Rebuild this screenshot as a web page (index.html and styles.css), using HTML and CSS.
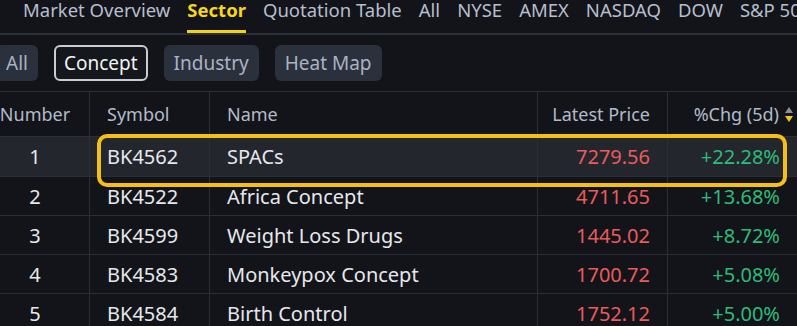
FILE: index.html
```html
<!DOCTYPE html>
<html lang="en">
<head>
<meta charset="utf-8">
<title>Sector</title>
<link rel="stylesheet" href="styles.css">
</head>
<body>
<div class="page">
  <nav class="tabs">
    <span class="tab-divider"></span>
    <a class="tab">Market Overview</a>
    <a class="tab active">Sector</a>
    <a class="tab">Quotation Table</a>
    <a class="tab">All</a>
    <a class="tab">NYSE</a>
    <a class="tab">AMEX</a>
    <a class="tab">NASDAQ</a>
    <a class="tab">DOW</a>
    <a class="tab">S&amp;P 500</a>
  </nav>
  <div class="pills">
    <span class="pill">All</span>
    <span class="pill selected">Concept</span>
    <span class="pill">Industry</span>
    <span class="pill">Heat Map</span>
  </div>
  <div class="table">
    <div class="row head">
      <div class="cell num">Number</div>
      <div class="cell">Symbol</div>
      <div class="cell">Name</div>
      <div class="cell right">Latest Price</div>
      <div class="cell right chg-head">%Chg (5d)<span class="sort"><span class="up"></span><span class="down"></span></span></div>
    </div>
    <div class="row hl">
      <div class="cell num">1</div>
      <div class="cell">BK4562</div>
      <div class="cell">SPACs</div>
      <div class="cell right red">7279.56</div>
      <div class="cell right green">+22.28%</div>
    </div>
    <div class="row">
      <div class="cell num">2</div>
      <div class="cell">BK4522</div>
      <div class="cell">Africa Concept</div>
      <div class="cell right red">4711.65</div>
      <div class="cell right green">+13.68%</div>
    </div>
    <div class="row">
      <div class="cell num">3</div>
      <div class="cell">BK4599</div>
      <div class="cell">Weight Loss Drugs</div>
      <div class="cell right red">1445.02</div>
      <div class="cell right green">+8.72%</div>
    </div>
    <div class="row">
      <div class="cell num">4</div>
      <div class="cell">BK4583</div>
      <div class="cell">Monkeypox Concept</div>
      <div class="cell right red">1700.72</div>
      <div class="cell right green">+5.08%</div>
    </div>
    <div class="row">
      <div class="cell num">5</div>
      <div class="cell">BK4584</div>
      <div class="cell">Birth Control</div>
      <div class="cell right red">1752.12</div>
      <div class="cell right green">+5.00%</div>
    </div>
    <div class="highlight-box"></div>
  </div>
</div>
</body>
</html>
```

FILE: styles.css
```css
* { box-sizing: border-box; }
html, body {
  margin: 0;
  padding: 0;
  background: #121419;
  overflow: hidden;
}
.page {
  width: 797px;
  height: 326px;
  overflow: hidden;
  font-family: "Noto Sans", "Open Sans", sans-serif;
  color: #e6e8ec;
}
.tabs {
  display: flex;
  align-items: flex-start;
  gap: 17px;
  padding-left: 6px;
  border-bottom: 2px solid #2a2e37;
  height: 35px;
  white-space: nowrap;
}
.tab-divider {
  width: 1px;
  height: 10px;
  margin-top: 6px;
  background: #3a3f49;
}
.tab {
  font-size: 18.5px;
  line-height: 20px;
  padding-bottom: 10px;
  border-bottom: 3px solid transparent;
  color: #b6bfce;
}
.tab.active {
  color: #f6d71c;
  font-weight: 700;
  border-bottom-color: #f2d31a;
}
.pills {
  display: flex;
  gap: 16px;
  margin: 10px 0 0 -4px;
  height: 36px;
}
.pill {
  height: 36px;
  line-height: 36px;
  padding: 0 10px;
  font-size: 19px;
  color: #aab3c3;
  background: #2a303c;
  border-radius: 6px;
  white-space: nowrap;
}
.pill.selected {
  border: 2px solid #c9cdd3;
  background: #14171c;
  color: #f2f3f5;
  line-height: 32px;
  padding: 0 8px;
}
.table {
  position: relative;
  margin-top: 10px;
  border-top: 1px solid #2a2e37;
}
.row {
  display: grid;
  grid-template-columns: 89px 120px 328px 130px 130px;
  height: 39px;
  border-bottom: 1px solid #2a2e37;
  font-size: 20px;
}
.row.head {
  height: 45px;
  font-size: 18px;
  color: #b3bbca;
}
.row.hl {
  height: 40px;
  background: #23262d;
}
.cell {
  display: flex;
  align-items: center;
  padding: 0 17px;
  border-left: 1px solid #2a2e37;
  white-space: nowrap;
}
.cell.num {
  border-left: none;
  justify-content: center;
  padding: 0 19px 0 0;
}
.cell.right {
  justify-content: flex-end;
}
.red { color: #ea5b5b; }
.green { color: #2dbb79; }
.chg-head { gap: 6px; }
.sort {
  display: flex;
  flex-direction: column;
  gap: 3px;
  margin-right: -13px;
}
.sort .up {
  width: 0;
  height: 0;
  border-left: 4px solid transparent;
  border-right: 4px solid transparent;
  border-bottom: 6px solid #8a909b;
}
.sort .down {
  width: 0;
  height: 0;
  border-left: 4px solid transparent;
  border-right: 4px solid transparent;
  border-top: 6px solid #f3c81b;
}
.highlight-box {
  position: absolute;
  left: 97px;
  top: 42px;
  width: 690px;
  height: 53px;
  border: 4px solid #f5bf16;
  border-radius: 10px;
  pointer-events: none;
}
```
